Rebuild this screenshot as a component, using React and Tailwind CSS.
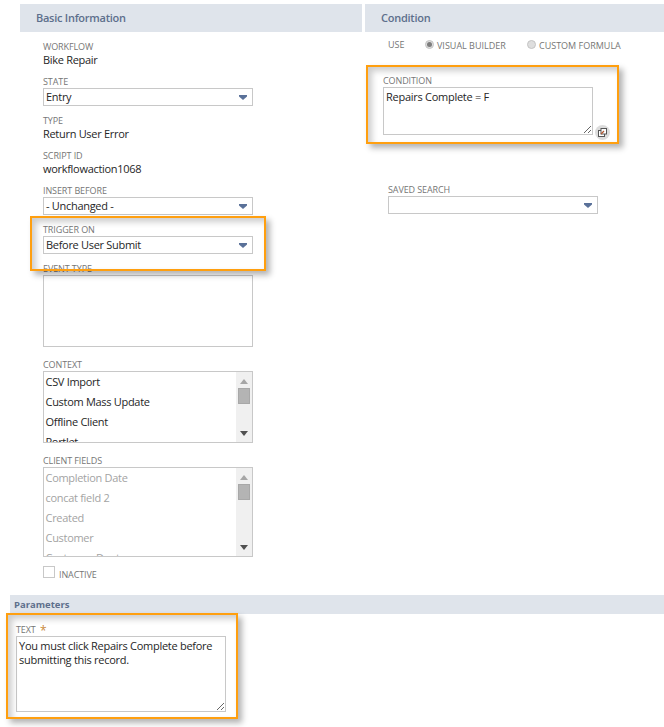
const Arrow = () => (
  <svg className="w-[8px] h-[5px]" viewBox="0 0 8 5">
    <path d="M0 0h8v1.5L4 5 0 1.5z" fill="#5a7199" />
  </svg>
);

const Label = ({ children, className = "" }) => (
  <div className={`h-[14px] leading-[16px] text-[9px] tracking-[-0.1px] text-[#767676] uppercase ${className}`}>
    {children}
  </div>
);

const Value = ({ children }) => (
  <div className="h-[14px] leading-[14px] text-[11px] tracking-[-0.3px] text-[#262626]">{children}</div>
);

const Select = ({ value }) => (
  <div className="w-[210px] h-[18px] border border-[#c8c8c8] bg-white flex items-center justify-between pl-[2px] pr-[5px] text-[11px] tracking-[-0.3px] text-[#262626]">
    <span>{value}</span>
    <Arrow />
  </div>
);

const ListBox = ({ items, height, muted }) => (
  <div
    className={`w-[210px] ${height} border border-[#c8c8c8] bg-white flex overflow-hidden text-[11px] tracking-[-0.3px] ${
      muted ? "text-[#a3a3a3]" : "text-[#262626]"
    }`}
  >
    <ul className="flex-1 pl-[1.5px]">
      {items.map((item) => (
        <li key={item} className="h-[20px] leading-[20px] whitespace-nowrap">
          {item}
        </li>
      ))}
    </ul>
    <div className="w-[16px] bg-[#f0f0f0] flex flex-col items-center justify-between pt-[7px] pb-[6px]">
      <div className="flex flex-col items-center">
        <svg className="w-[8px] h-[5px]" viewBox="0 0 8 5">
          <path d="M4 0l4 5H0z" fill="#a6a6a6" />
        </svg>
        <div className="w-[12px] h-[16px] mt-[4px] bg-[#b4b4b4] border border-[#a8a8a8]" />
      </div>
      <svg className="w-[8px] h-[5px]" viewBox="0 0 8 5">
        <path d="M0 0h8L4 5z" fill="#505050" />
      </svg>
    </div>
  </div>
);

const Radio = ({ checked }) => (
  <span className="w-[9px] h-[9px] -mt-[2px] rounded-full border border-[#c4c4c4] bg-[#dedede] flex items-center justify-center">
    {checked && <span className="w-[5px] h-[5px] rounded-full bg-[#7d7d7d]" />}
  </span>
);

const Callout = ({ className }) => (
  <div
    className={`absolute border-2 border-[#ff9f0f] pointer-events-none shadow-[4px_4px_6px_rgba(0,0,0,0.3),inset_4px_4px_6px_rgba(0,0,0,0.2)] ${className}`}
  />
);

const SectionHeader = ({ children }) => (
  <div className="h-[28px] bg-[#dfe4eb] pl-[16px] flex items-center text-[11px] tracking-[-0.26px] font-semibold text-[#5d6f8c]">
    {children}
  </div>
);

const BasicInformation = () => (
  <div className="w-[342px]">
    <SectionHeader>Basic Information</SectionHeader>
    <div className="pl-[23px] pt-[7px]">
      <Label>Workflow</Label>
      <Value>Bike Repair</Value>
      <Label className="mt-[7px]">State</Label>
      <Select value="Entry" />
      <Label className="mt-[7px]">Type</Label>
      <Value>Return User Error</Value>
      <Label className="mt-[7px]">Script ID</Label>
      <Value>workflowaction1068</Value>
      <Label className="mt-[7px]">Insert Before</Label>
      <Select value="- Unchanged -" />
      <Label className="mt-[7px]">Trigger On</Label>
      <Select value="Before User Submit" />
      <Label className="mt-[7px]">Event Type</Label>
      <div className="w-[210px] h-[72px] border border-[#c8c8c8] bg-white" />
      <Label className="mt-[10px]">Context</Label>
      <ListBox
        height="h-[72px]"
        items={["CSV Import", "Custom Mass Update", "Offline Client", "Portlet"]}
      />
      <Label className="mt-[10px]">Client Fields</Label>
      <ListBox
        muted
        height="h-[90px]"
        items={["Completion Date", "concat field 2", "Created", "Customer", "Customer Dept"]}
      />
      <div className="mt-[9px] h-[12px] flex items-center">
        <span className="w-[12px] h-[12px] border border-[#c8c8c8] bg-white" />
        <span className="ml-[4px] mt-[6px] text-[9px] tracking-[-0.1px] text-[#767676]">INACTIVE</span>
      </div>
    </div>
  </div>
);

const Condition = () => (
  <div className="flex-1">
    <SectionHeader>Condition</SectionHeader>
    <div className="pl-[23px] pt-[6px]">
      <div className="h-[14px] flex items-center text-[9px] text-[#767676]">
        <span className="w-[37px] -mt-[1px]">USE</span>
        <Radio checked />
        <span className="ml-[3px] w-[90px] mt-[1px]">VISUAL BUILDER</span>
        <Radio />
        <span className="ml-[3px] mt-[1px]">CUSTOM FORMULA</span>
      </div>
      <div className="-ml-[5px] mt-[21px]">
        <Label>Condition</Label>
        <div className="flex h-[48px]">
          <textarea
            readOnly
            defaultValue="Repairs Complete = F"
            className="w-[210px] h-[48px] border border-[#c8c8c8] bg-white px-[2px] py-[2px] text-[11px] tracking-[-0.27px] leading-[14px] text-[#262626] outline-none"
          />
          <span className="ml-[2px] self-end -mb-[5px] w-[15px] h-[15px] rounded-full bg-[#dcdcdc] flex items-center justify-center">
            <svg className="w-[9px] h-[9px]" viewBox="0 0 9 9">
              <rect x="0.5" y="2.5" width="6" height="6" fill="#fff" stroke="#555" />
              <rect x="3" y="0.5" width="5.5" height="5.5" fill="#fff" stroke="#555" />
              <path d="M3 6l3-3" stroke="#b5562f" strokeWidth="1.2" />
            </svg>
          </span>
        </div>
      </div>
      <Label className="mt-[47px]">Saved Search</Label>
      <Select value="" />
    </div>
  </div>
);

export default function App() {
  return (
    <div className="relative w-[664px] h-[727px] bg-white overflow-hidden font-['Open_Sans',sans-serif]">
      <div className="flex pt-[4px] pl-[20px] gap-[3px]">
        <BasicInformation />
        <Condition />
      </div>
      <div className="mt-[17px] ml-[10px] h-[19px] bg-[#dfe4eb] pl-[4px] pt-[1px] flex items-center text-[9.5px] font-bold text-[#5d6f8c]">
        Parameters
      </div>
      <div className="pl-[16px] pt-[8px]">
        <Label>
          Text <span className="inline-block translate-y-[2px] text-[12px] leading-[10px] text-[#c98a3a] ml-[2px]">*</span>
        </Label>
        <textarea
          readOnly
          defaultValue="You must click Repairs Complete before submitting this record."
          className="block w-[210px] h-[76px] border border-[#c8c8c8] bg-white px-[2px] py-[2px] text-[11px] tracking-[-0.27px] leading-[14px] text-[#262626] outline-none"
        />
      </div>
      <Callout className="left-[30px] top-[216px] w-[236px] h-[55px]" />
      <Callout className="left-[366px] top-[65px] w-[253px] h-[79px]" />
      <Callout className="left-[6px] top-[613px] w-[232px] h-[106px]" />
    </div>
  );
}
